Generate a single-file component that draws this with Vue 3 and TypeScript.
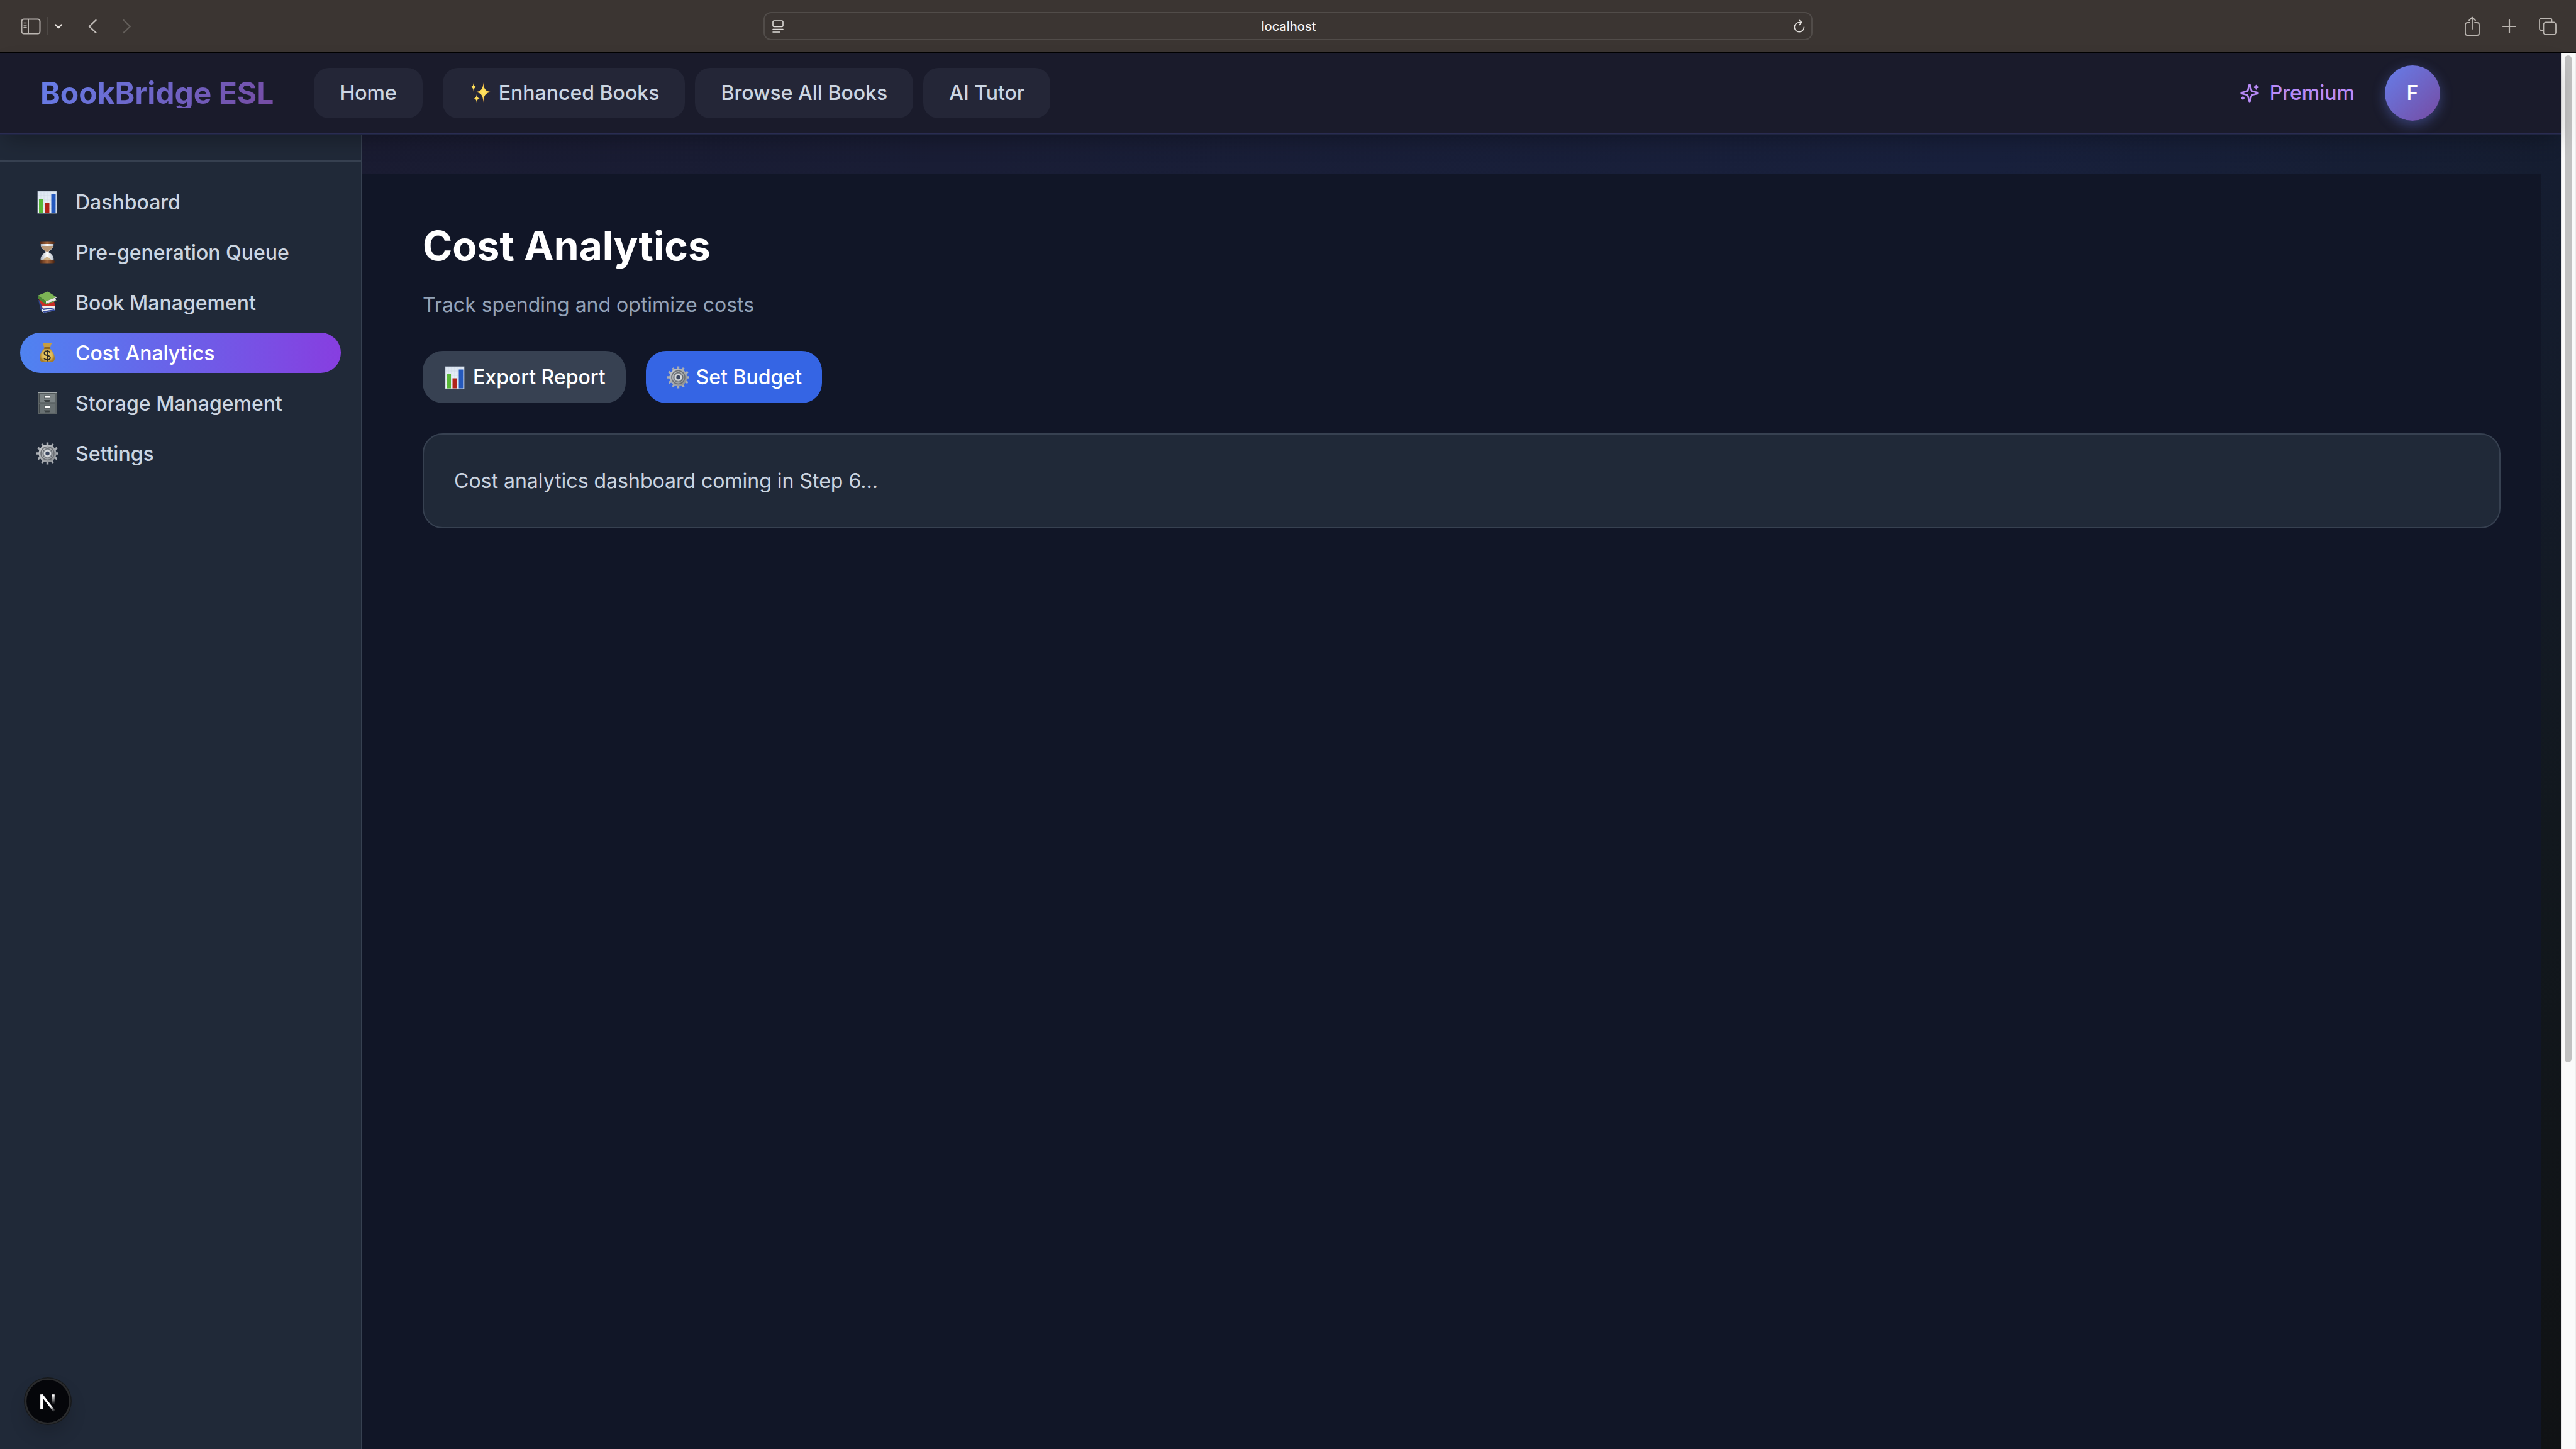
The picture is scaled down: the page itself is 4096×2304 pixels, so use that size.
<script setup lang="ts">
import { ref } from 'vue'

interface SidebarItem {
  label: string
  icon: 'chart' | 'hourglass' | 'books' | 'money' | 'cabinet' | 'gear'
}

const address = ref('localhost')
const active = ref('Cost Analytics')

const sidebarItems: SidebarItem[] = [
  { label: 'Dashboard', icon: 'chart' },
  { label: 'Pre-generation Queue', icon: 'hourglass' },
  { label: 'Book Management', icon: 'books' },
  { label: 'Cost Analytics', icon: 'money' },
  { label: 'Storage Management', icon: 'cabinet' },
  { label: 'Settings', icon: 'gear' },
]
</script>

<template>
  <div class="window">
    <svg class="defs" aria-hidden="true">
      <defs>
        <linearGradient id="paper" x1="0" y1="0" x2="0" y2="1">
          <stop offset="0" stop-color="#dce6f2" />
          <stop offset="1" stop-color="#f4f8fb" />
        </linearGradient>
        <linearGradient id="steel" x1="0" y1="0" x2="1" y2="1">
          <stop offset="0" stop-color="#c9ccd0" />
          <stop offset="1" stop-color="#85898e" />
        </linearGradient>
        <linearGradient id="wood" x1="0" y1="0" x2="1" y2="0">
          <stop offset="0" stop-color="#4a2412" />
          <stop offset="0.5" stop-color="#a4663c" />
          <stop offset="1" stop-color="#4a2412" />
        </linearGradient>
        <linearGradient id="glass" x1="0" y1="0" x2="1" y2="0">
          <stop offset="0" stop-color="#a9b2bd" />
          <stop offset="0.5" stop-color="#ffffff" />
          <stop offset="1" stop-color="#b5bdc7" />
        </linearGradient>
        <radialGradient id="gold">
          <stop offset="0" stop-color="#f2d67a" />
          <stop offset="0.7" stop-color="#d9b450" />
          <stop offset="1" stop-color="#a57c2c" />
        </radialGradient>
        <radialGradient id="spark">
          <stop offset="0" stop-color="#ffe566" />
          <stop offset="0.5" stop-color="#fbd54f" />
          <stop offset="1" stop-color="#d98a3d" />
        </radialGradient>
        <linearGradient id="n-diagonal" gradientUnits="userSpaceOnUse" x1="43" y1="46" x2="49" y2="54">
          <stop offset="0" stop-color="#fff" />
          <stop offset="1" stop-color="#fff" stop-opacity="0" />
        </linearGradient>
        <linearGradient id="n-bar" gradientUnits="userSpaceOnUse" x1="47" y1="28" x2="47" y2="43">
          <stop offset="0" stop-color="#fff" />
          <stop offset="1" stop-color="#fff" stop-opacity="0" />
        </linearGradient>

        <symbol id="chart" viewBox="0 0 38 38">
          <rect x="4" y="2" width="30" height="35" fill="url(#paper)" stroke="#a9b3c0" stroke-width="0.8" />
          <path d="M9 2v35M14 2v35M19 2v35M24 2v35M29 2v35M4 9h30M4 16h30M4 23h30M4 30h30" stroke="#c5d0de" stroke-width="0.5" />
          <rect x="6" y="14" width="7" height="22.500" fill="#58b838" />
          <rect x="15.500" y="20.500" width="7" height="16" fill="#b02419" />
          <rect x="25.500" y="6.500" width="7" height="30" fill="#2559bd" />
        </symbol>

        <symbol id="hourglass" viewBox="0 0 38 38">
          <path d="M9 5h20c1 6-1 8-8.500 13.500C28 23 30.500 27 29 33H9c-1.500-6 1-10 8.500-14.500C10 13 8 11 9 5z" fill="url(#glass)" />
          <path d="M9.500 9h19c0 3-3 5-7 8l-2.500 2-2.500-2c-4-3-7-5-7-8z" fill="#b79574" />
          <path d="M19 18v8c3 2 6 4 8 7H11c2-3 5-5 8-7" fill="#c4a06a" opacity="0.8" />
          <rect x="7" y="1.500" width="24" height="4.500" rx="2" fill="url(#wood)" />
          <rect x="7" y="32" width="24" height="4.500" rx="2" fill="url(#wood)" />
        </symbol>

        <symbol id="books" viewBox="0 0 38 38">
          <path d="M5 15l4 17 4 1.500L9 17z" fill="#2f4690" />
          <path d="M11 28l18-1 3 1v4l-18 3-4-2z" fill="#e6e9f0" />
          <path d="M10 28l20-1.500 2 1.500-19 3zM12 33l18-3 2 2-18 3z" fill="#33499a" />
          <path d="M6 14l24 3 2 9-20 2.500z" fill="#c92f26" />
          <path d="M11 25l20-1v3l-19 1.500z" fill="#f1eeee" />
          <path d="M4 8L20 1.500 34 10.500 17 17z" fill="#7cb455" />
          <path d="M4 8l13 9v5L5 13z" fill="#4b8734" />
          <path d="M17 17l17-6.500v1l-2 1 1.500 3.500L17 22z" fill="#ece9ea" />
          <path d="M17 20.500l16.500-5.500v1.200L17 22z" fill="#5a9640" />
        </symbol>

        <symbol id="money" viewBox="0 0 38 38">
          <path d="M11.500 3c2 1.500 3 0 4.500 0s2 1 3 1 2-1.500 3.500-1 2.500 1 4 0L23 12h-8z" fill="#c79d40" />
          <path d="M15 11h8c3 4 8 9 8 17 0 5-3 6-12 6S7 33 7 28c0-8 5-13 8-17z" fill="url(#gold)" />
          <rect x="14" y="10" width="10" height="3" rx="1.500" fill="#8a6422" />
          <path d="M23.500 18.500c-1-1.800-2.600-2.300-4.500-2.300-2.700 0-4.600 1.300-4.600 3.500 0 4.800 9.400 2.200 9.400 7 0 2.200-2 3.500-4.800 3.500-2.300 0-4-.8-5-2.800M19 14v18.500" fill="none" stroke="#2d2a24" stroke-width="1.900" />
        </symbol>

        <symbol id="cabinet" viewBox="0 0 38 38">
          <rect x="4" y="1" width="30" height="36" rx="1" fill="#5d6466" />
          <rect x="4" y="1" width="30" height="2" fill="#a4abad" />
          <rect x="6.500" y="4" width="25" height="14" fill="#7b8385" stroke="#484e50" />
          <rect x="6.500" y="20.500" width="25" height="14" fill="#697173" stroke="#43494b" />
          <rect x="14.500" y="7" width="9" height="4" fill="#fff" stroke="#4c5254" stroke-width="0.800" />
          <rect x="14.500" y="23" width="9" height="4" fill="#fff" stroke="#4c5254" stroke-width="0.800" />
          <path d="M14 14h10l-1.500 3h-7zM14 30.500h10L22.500 33.500h-7z" fill="#3c4244" />
        </symbol>

        <symbol id="gear" viewBox="0 0 38 38">
          <g stroke="#a9adb3" stroke-width="3.400">
            <path d="M19.500 1.500v35M2 19h35" />
            <path d="M19.500 1.500v35M2 19h35" transform="rotate(30 19.500 19)" />
            <path d="M19.500 1.500v35M2 19h35" transform="rotate(60 19.500 19)" />
          </g>
          <circle cx="19.500" cy="19" r="14" fill="url(#steel)" />
          <circle cx="19.500" cy="19" r="10.500" fill="none" stroke="#6c7076" stroke-width="1.600" />
          <circle cx="19.500" cy="19" r="7.500" fill="#8f949a" stroke="#5c6066" />
          <circle cx="19.500" cy="19" r="4.600" fill="none" stroke="#d5d8dc" stroke-width="2.400" />
          <circle cx="19.500" cy="19" r="3" class="gear-hole" />
        </symbol>

        <symbol id="sparkles" viewBox="0 0 38 38">
          <path d="M23.500 2c.8 10 2.500 13.700 12.500 15.300-10 1.600-11.700 6-12.500 16.700-.8-10.700-2.500-15.100-12.500-16.700C21 15.700 22.700 12 23.500 2z" fill="url(#spark)" />
          <path d="M8 2c.5 4.800 1.200 6.500 5 7.300-3.800.8-4.500 2.700-5 7.700-.5-5-1.200-6.900-5-7.700C6.800 8.500 7.500 6.800 8 2z" fill="url(#spark)" />
          <path d="M13 20c.5 4.800 1.200 6.700 5 7.500-3.800.8-4.500 2.500-5 7.200-.5-4.700-1.200-6.400-5-7.200 3.800-.8 4.500-2.700 5-7.500z" fill="url(#spark)" />
        </symbol>
      </defs>
    </svg>

    <div class="toolbar">
      <div class="tools">
        <button class="tool" type="button" aria-label="Show sidebar">
          <svg width="32" height="26" viewBox="0 0 32 26" fill="none" stroke="#bbb6b1" stroke-width="2">
            <rect x="1.500" y="1.500" width="29" height="23" rx="3.500" />
            <path d="M12 1.500v23" />
            <path d="M5 7.500h4M5 11h4M5 14.500h4" stroke-width="1.400" stroke-linecap="round" />
          </svg>
        </button>
        <span class="tool-divider"></span>
        <button class="tool" type="button" aria-label="Tab groups">
          <svg width="12" height="8" viewBox="0 0 12 8" fill="none" stroke="#e8e3df" stroke-width="2.400" stroke-linecap="round" stroke-linejoin="round">
            <path d="M1.500 1.500L6 6.200l4.500-4.700" />
          </svg>
        </button>
        <button class="tool history" type="button" aria-label="Back">
          <svg width="14" height="24" viewBox="0 0 14 24" fill="none" stroke="#c1bcb8" stroke-width="2.400" stroke-linecap="round" stroke-linejoin="round">
            <path d="M12.500 2L2 12l10.500 10" />
          </svg>
        </button>
        <button class="tool history" type="button" aria-label="Forward" disabled>
          <svg width="14" height="24" viewBox="0 0 14 24" fill="none" stroke="#625d59" stroke-width="2.400" stroke-linecap="round" stroke-linejoin="round">
            <path d="M1.500 2L12 12 1.500 22" />
          </svg>
        </button>
      </div>

      <div class="address">
        <button class="tool" type="button" aria-label="Reader">
          <svg width="18" height="20" viewBox="0 0 18 20" fill="none" stroke="#dedbd8" stroke-width="1.600" stroke-linecap="round">
            <rect x="1" y="1" width="16" height="9.500" rx="2" />
            <path d="M1 14.500h16M1 19h11" />
          </svg>
        </button>
        <input v-model="address" class="address-input" type="text" aria-label="Address" />
        <button class="tool" type="button" aria-label="Reload">
          <svg width="18" height="21" viewBox="0 0 18 21" fill="none" stroke="#e4e1de" stroke-width="1.700" stroke-linecap="round" stroke-linejoin="round">
            <path d="M16.500 12a7.600 7.600 0 1 1-7.700-7.500h4M8.800 1l4 3.700-4 4" />
          </svg>
        </button>
      </div>

      <div class="tools tools-end">
        <button class="tool" type="button" aria-label="Share">
          <svg width="24" height="32" viewBox="0 0 24 32" fill="none" stroke="#bbb6b1" stroke-width="1.800" stroke-linecap="round" stroke-linejoin="round">
            <path d="M8 10H4.500C2.500 10 1 11 1 13v14c0 2 1 3 3 3h16c2 0 3-1 3-3V13c0-2-1.500-3-3.500-3H16" />
            <path d="M12 20V1.500M7 6.500l5-5 5 5" />
          </svg>
        </button>
        <button class="tool" type="button" aria-label="New tab">
          <svg width="22" height="22" viewBox="0 0 22 22" fill="none" stroke="#bbb6b1" stroke-width="2.200" stroke-linecap="round">
            <path d="M11 1v20M1 11h20" />
          </svg>
        </button>
        <button class="tool" type="button" aria-label="Tab overview">
          <svg width="28" height="28" viewBox="0 0 28 28" fill="none" stroke="#bbb6b1" stroke-width="1.800">
            <rect x="7.500" y="7.500" width="19.500" height="19.500" rx="3.500" />
            <path d="M7.500 20.500H4.500c-2 0-3.500-1-3.500-3.500V4.500C1 2 2.500 1 4.500 1h12.500c2.500 0 3.500 1.500 3.500 3.500v3" />
          </svg>
        </button>
      </div>
    </div>

    <div class="viewport">
      <div class="page">
        <header class="site-header">
          <a class="brand" href="#">BookBridge ESL</a>
          <nav class="site-nav" aria-label="Main">
            <a class="nav-link home" href="#">Home</a>
            <a class="nav-link" href="#">
              <svg class="emoji" aria-hidden="true"><use href="#sparkles" /></svg>
              Enhanced Books
            </a>
            <a class="nav-link" href="#">Browse All Books</a>
            <a class="nav-link" href="#">AI Tutor</a>
          </nav>
          <a class="premium" href="#">
            <svg width="32" height="32" viewBox="0 0 24 24" fill="none" stroke="currentColor" stroke-width="2" stroke-linecap="round" stroke-linejoin="round" aria-hidden="true">
              <path d="M9.937 15.500A2 2 0 0 0 8.500 14.063l-6.135-1.582a.5.5 0 0 1 0-.962L8.500 9.936A2 2 0 0 0 9.937 8.500l1.582-6.135a.5.5 0 0 1 .963 0L14.063 8.500A2 2 0 0 0 15.500 9.937l6.135 1.581a.5.5 0 0 1 0 .964L15.500 14.063a2 2 0 0 0-1.437 1.437l-1.582 6.135a.5.5 0 0 1-.963 0z" />
              <path d="M20 3v4M22 5h-4M4 17v2M5 18H3" />
            </svg>
            Premium
          </a>
          <button class="avatar" type="button" aria-label="Account">F</button>
        </header>

        <div class="body">
          <aside class="sidebar">
            <div class="sidebar-top"></div>
            <nav class="sidebar-nav" aria-label="Admin">
              <a
                v-for="item in sidebarItems"
                :key="item.label"
                class="sidebar-link"
                :class="{ active: item.label === active }"
                href="#"
                @click.prevent="active = item.label"
              >
                <svg class="emoji" aria-hidden="true"><use :href="'#' + item.icon" /></svg>
                {{ item.label }}
              </a>
            </nav>
          </aside>

          <main class="content">
            <h1 class="title">Cost Analytics</h1>
            <p class="subtitle">Track spending and optimize costs</p>
            <div class="actions">
              <button class="action" type="button">
                <svg class="emoji" aria-hidden="true"><use href="#chart" /></svg>
                Export Report
              </button>
              <button class="action primary" type="button">
                <svg class="emoji" aria-hidden="true"><use href="#gear" /></svg>
                Set Budget
              </button>
            </div>
            <section class="card">
              <p class="card-text">Cost analytics dashboard coming in Step 6...</p>
            </section>
          </main>
        </div>
      </div>

      <div class="scroll-track" aria-hidden="true">
        <div class="scroll-thumb"></div>
      </div>
    </div>

    <button class="dev-badge" type="button" aria-label="Open developer tools">
      <svg width="76" height="76" viewBox="0 0 76 76" fill="none" aria-hidden="true">
        <circle cx="38" cy="38" r="38" fill="#17191b" />
        <circle cx="38" cy="38" r="35.200" fill="#05060a" stroke="#2a2b2d" stroke-width="2.600" />
        <path d="M28.200 50V27.200" stroke="#fff" stroke-width="4.200" />
        <path d="M28.500 28.200L48.500 54" stroke="url(#n-diagonal)" stroke-width="3.600" />
        <path d="M46.800 27.200V43.500" stroke="url(#n-bar)" stroke-width="4" />
      </svg>
    </button>
  </div>
</template>

<style>
body {
  margin: 0;
  background: #111627;
}
</style>

<style scoped>
.window {
  position: relative;
  display: flex;
  flex-direction: column;
  min-height: 100vh;
  font-family: Inter, "Liberation Sans", sans-serif;
  font-size: 32px;
}

.window *,
.window *::before,
.window *::after {
  box-sizing: border-box;
}

.defs {
  position: absolute;
  width: 0;
  height: 0;
}

a {
  color: inherit;
  text-decoration: none;
}

button {
  margin: 0;
  padding: 0;
  border: 0;
  background: none;
  font: inherit;
  color: inherit;
}

.emoji {
  flex: none;
  width: 38px;
  height: 38px;
}

.gear-hole {
  fill: #3a4660;
}

/* Browser toolbar */
.toolbar {
  display: grid;
  grid-template-columns: 1fr minmax(0, 1668px) 1fr;
  align-items: center;
  height: 84px;
  border-bottom: 1px solid #000;
  background: #3b3532;
}

.tools {
  display: flex;
  align-items: center;
  gap: 10px;
  padding-left: 33px;
}

.tool {
  display: flex;
}

.tool-divider {
  width: 2px;
  height: 29px;
  background: #4d4845;
}

.history {
  margin-left: 31px;
}

.tools-end {
  justify-content: flex-end;
  gap: 36px;
  padding: 0 31px 0 0;
}

.address {
  display: flex;
  align-items: center;
  height: 45px;
  padding: 0 10px 0 12px;
  border: 2px solid #514c49;
  border-radius: 12px;
}

.address-input {
  flex: 1;
  min-width: 0;
  padding: 0;
  border: 0;
  outline: 0;
  background: none;
  color: #f5f3f2;
  font-family: inherit;
  font-size: 20px;
  font-weight: 500;
  text-align: center;
}

/* Page */
.viewport {
  display: flex;
  flex: 1;
}

.page {
  display: flex;
  flex: 1;
  flex-direction: column;
  min-width: 0;
  background: linear-gradient(135deg, #1a1a2e 0%, #18203c 53%, #151d30 68%, #12181e 84%, #101214 100%);
}

.site-header {
  position: relative;
  z-index: 1;
  display: flex;
  align-items: center;
  height: 129px;
  padding: 0 192px 0 64px;
  border-bottom: 2px solid #2a2c52;
  background: #1a1b2b;
  box-shadow: 0 2px 0 #1f2540, 0 16px 32px -8px rgba(0, 0, 0, 0.3);
  color: #cbd5e1;
  font-weight: 500;
}

.brand {
  margin-right: 64px;
  background: linear-gradient(135deg, #667eea 0%, #764ba2 100%);
  background-clip: text;
  -webkit-background-clip: text;
  color: transparent;
  font-size: 48px;
  font-weight: 700;
  line-height: 48px;
  white-space: nowrap;
}

.site-nav {
  display: flex;
  flex: 1;
  gap: 16px;
}

.nav-link {
  display: flex;
  align-items: center;
  gap: 10px;
  height: 80px;
  padding: 0 41px;
  border-radius: 24px;
  background: #242637;
  white-space: nowrap;
}

.home {
  margin-right: 16px;
}

.premium {
  display: flex;
  align-items: center;
  gap: 16px;
  margin-right: 48px;
  color: #b98bf8;
}

.avatar {
  width: 88px;
  height: 88px;
  border-radius: 50%;
  background: linear-gradient(135deg, #667eea 0%, #764ba2 100%);
  box-shadow: 0 6px 20px rgba(102, 126, 234, 0.4);
  color: #fff;
  font-weight: 500;
}

.body {
  display: flex;
  flex: 1;
}

.sidebar {
  flex: none;
  width: 576px;
  border-right: 2px solid #374151;
  background: #202938;
  color: #cbd5e1;
  font-weight: 500;
}

.sidebar-top {
  height: 44px;
  border-bottom: 2px solid #374151;
}

.sidebar-nav {
  display: flex;
  flex-direction: column;
  gap: 16px;
  padding: 32px;
}

.sidebar-link {
  display: flex;
  align-items: center;
  gap: 26px;
  height: 64px;
  padding: 0 24px;
  border-radius: 32px;
  white-space: nowrap;
}

.active {
  background: linear-gradient(90deg, #4f83f1 0%, #873ee0 100%);
  color: #fff;
}

.content {
  flex: 1;
  min-width: 0;
  margin: 64px 32px 0 0;
  padding: 64px 64px 64px 96px;
  background: #111627;
}

.title {
  margin: 0 0 18px;
  color: #fff;
  font-size: 64px;
  font-weight: 700;
  line-height: 100px;
}

.subtitle {
  margin: 0 0 48px;
  color: #94a3b8;
  line-height: 51px;
}

.actions {
  display: flex;
  gap: 32px;
  margin-bottom: 48px;
}

.action {
  display: flex;
  align-items: center;
  gap: 10px;
  height: 83px;
  padding: 0 32px;
  border-radius: 32px;
  background: #374152;
  color: #fff;
  font-weight: 500;
}

.primary {
  background: #3565e4;
}

.card {
  padding: 48px;
  border: 2px solid #374151;
  border-radius: 32px;
  background: #202938;
}

.card-text {
  margin: 0;
  color: #cbd5e1;
  line-height: 51px;
}

.scroll-track {
  flex: none;
  width: 24px;
  padding: 4px 5px 4px 4px;
  border-left: 2px solid #e8e8e8;
  border-right: 2px solid #ededed;
  background: #fafafa;
}

.scroll-thumb {
  height: 72.4%;
  border-radius: 8px;
  background: #c1c1c1;
}

/* Floating over the page's lower left corner */
.dev-badge {
  position: absolute;
  bottom: 38px;
  left: 38px;
  z-index: 2;
  display: flex;
  border-radius: 50%;
  box-shadow: 0 16px 32px -8px rgba(0, 0, 0, 0.24);
}
</style>
